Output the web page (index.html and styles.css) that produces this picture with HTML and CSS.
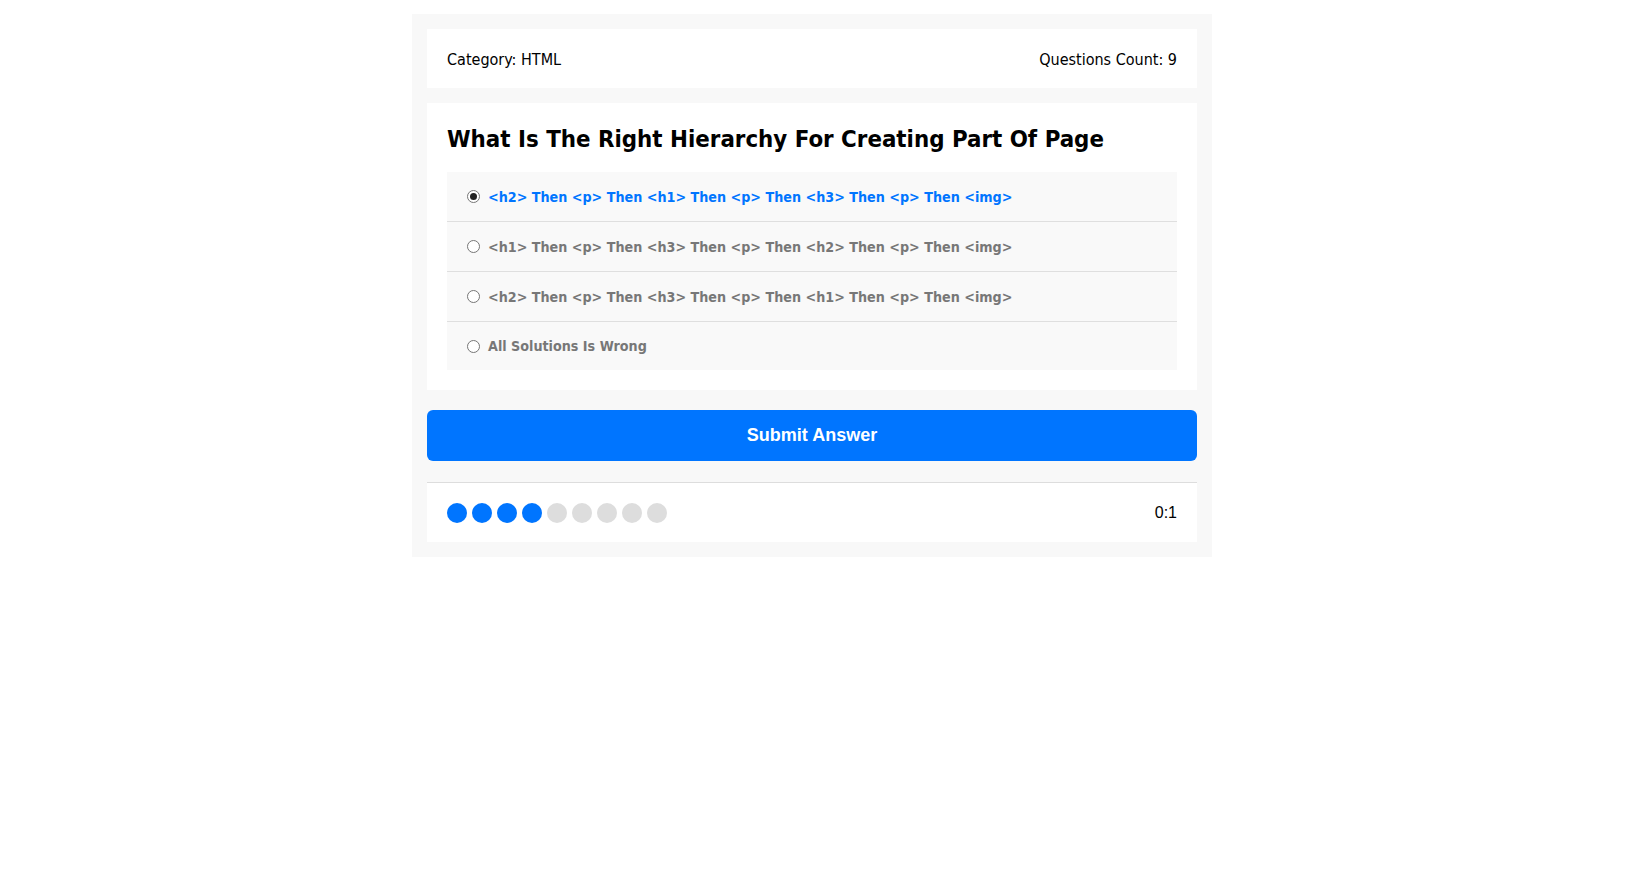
FILE: index.html
```html
<!DOCTYPE html>
<html>
<head>
<meta charset="utf-8">
<link rel="stylesheet" href="styles.css">
</head>
<body>
<div class="quiz-app">
  <div class="quiz-info">
    <div class="category">Category: <span>HTML</span></div>
    <div class="count">Questions Count: <span>9</span></div>
  </div>
  <div class="quiz-area">
    <h2 class="question">What Is The Right Hierarchy For Creating Part Of Page</h2>
    <div class="answers">
      <div class="answer">
        <input type="radio" name="q" id="a1" class="radio" checked>
        <label for="a1">&lt;h2&gt; Then &lt;p&gt; Then &lt;h1&gt; Then &lt;p&gt; Then &lt;h3&gt; Then &lt;p&gt; Then &lt;img&gt;</label>
      </div>
      <div class="answer">
        <input type="radio" name="q" id="a2" class="radio">
        <label for="a2">&lt;h1&gt; Then &lt;p&gt; Then &lt;h3&gt; Then &lt;p&gt; Then &lt;h2&gt; Then &lt;p&gt; Then &lt;img&gt;</label>
      </div>
      <div class="answer">
        <input type="radio" name="q" id="a3" class="radio">
        <label for="a3">&lt;h2&gt; Then &lt;p&gt; Then &lt;h3&gt; Then &lt;p&gt; Then &lt;h1&gt; Then &lt;p&gt; Then &lt;img&gt;</label>
      </div>
      <div class="answer">
        <input type="radio" name="q" id="a4" class="radio">
        <label for="a4">All Solutions Is Wrong</label>
      </div>
    </div>
  </div>
  <button class="submit-button">Submit Answer</button>
  <div class="bullets">
    <div class="spans">
      <span class="on"></span><span class="on"></span><span class="on"></span><span class="on"></span><span></span><span></span><span></span><span></span><span></span>
    </div>
    <div class="countdown">0:1</div>
  </div>
</div>
</body>
</html>
```
FILE: styles.css
```css
* {
  box-sizing: border-box;
}
body {
  margin: 0;
  padding-right: 7px;
  background: #fff;
  font-family: "DejaVu Sans Condensed", "DejaVu Sans", sans-serif;
  font-stretch: condensed;
}
.quiz-app {
  width: 800px;
  margin: 14px auto 0;
  background: #f8f8f8;
  padding: 15px;
}
.quiz-info {
  display: flex;
  justify-content: space-between;
  align-items: center;
  background: #fff;
  height: 59px;
  padding: 1px 20px 0;
  font-size: 16px;
  color: #000;
}
.quiz-area {
  background: #fff;
  padding: 22px 20px 20px;
  margin-top: 15px;
}
.question {
  margin: 0 0 18px;
  font-size: 23.8px;
  line-height: 29px;
  font-weight: bold;
  color: #000;
}
.answers {
  background: #f9f9f9;
}
.answer {
  display: flex;
  align-items: center;
  height: 50px;
  padding: 0 15px 0 20px;
  border-bottom: 1px solid #dfdfdf;
}
.answer:last-child {
  border-bottom: none;
  height: 48px;
}
.radio {
  appearance: none;
  -webkit-appearance: none;
  width: 13px;
  height: 13px;
  margin: 0 8px 0 0;
  border: 1px solid #767676;
  border-radius: 50%;
  background: #fff;
  position: relative;
  flex-shrink: 0;
}
.radio:checked::after {
  content: "";
  position: absolute;
  left: 2px;
  top: 2px;
  width: 7px;
  height: 7px;
  border-radius: 50%;
  background: #222;
}
.answer label {
  font-size: 14.2px;
  font-weight: bold;
  color: #777;
  cursor: pointer;
}
.radio:checked + label {
  color: #0075ff;
}
.submit-button {
  display: block;
  width: 100%;
  height: 51px;
  margin-top: 20px;
  border: none;
  border-radius: 6px;
  background: #0075ff;
  color: #fff;
  font-family: "Liberation Sans", Arial, sans-serif;
  font-size: 18px;
  font-weight: bold;
  cursor: pointer;
}
.bullets {
  display: flex;
  justify-content: space-between;
  align-items: center;
  margin-top: 21px;
  border-top: 1px solid #ddd;
  background: #fff;
  height: 60px;
  padding: 0 20px;
}
.spans {
  display: flex;
  gap: 5px;
}
.spans span {
  width: 20px;
  height: 20px;
  border-radius: 50%;
  background: #ddd;
}
.spans span.on {
  background: #0075ff;
}
.countdown {
  font-family: "Liberation Sans", Arial, sans-serif;
  font-size: 16px;
  color: #000;
}
```
